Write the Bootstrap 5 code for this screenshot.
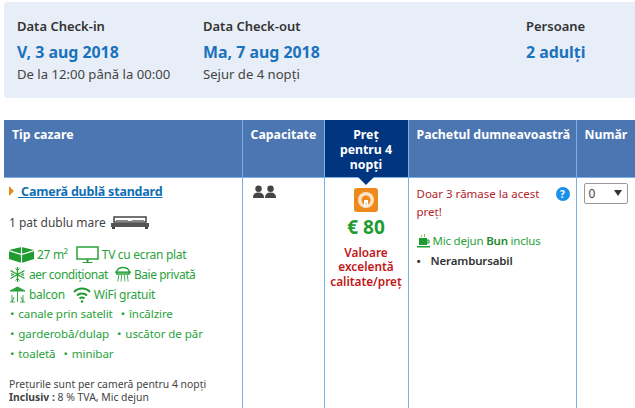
<!DOCTYPE html>
<html lang="ro">
<head>
<meta charset="UTF-8">
<title>Rezervare</title>
<link href="https://cdn.jsdelivr.net/npm/bootstrap@5.3.3/dist/css/bootstrap.min.css" rel="stylesheet">
<style>
html, body { height: 408px; overflow: hidden; }
body { font-family: "Noto Sans", "Open Sans", sans-serif; font-size: 12px; color: #333; background: #fff; padding: 2px 0 0 4px; }
.stay-box { height: 96px; background: #e8eef8; border-radius: 3px 0 0 3px; padding: 15px 13px 0; }
.stay-col-a { width: 186px; }
.stay-col-b { width: 323px; }
.stay-label { font-size: 13px; font-weight: 600; line-height: 18px; color: #333; }
.stay-date { font-size: 15.9px; font-weight: 700; line-height: 22px; margin-top: 6px; color: #1a72bd; }
.stay-note { font-size: 13.1px; line-height: 18px; margin-top: 2px; color: #444; }
.room-table { width: 631px; margin-top: 22px; table-layout: fixed; border-collapse: collapse; }
.room-table th { height: 57px; background: #4c76b2; color: #fff; font-size: 12.3px; font-weight: 700; line-height: 15px; vertical-align: top; padding: 7px 8px; border-right: 1px solid #7ab2e6; border-bottom: 1px solid #7ab2e6; white-space: nowrap; }
.room-table th.price-head { background: #003580; text-align: center; position: relative; padding: 7px 10px 0; white-space: normal; }
.price-head::after { content: ""; position: absolute; left: 50%; bottom: -8px; margin-left: -8px; border: 8px solid transparent; border-bottom: 0; border-top-color: #003580; }
.room-table td { vertical-align: top; border-right: 1px solid #7ab2e6; height: 231px; }
.room-table td.room-cell { padding: 5px 0 0 5px; }
.room-name { display: block; font-size: 12.5px; font-weight: 700; line-height: 18px; letter-spacing: -.2px; color: #0f6fb5; }
.room-name a { color: #0f6fb5; text-decoration: underline; }
.room-arrow { display: inline-block; border: 5px solid transparent; border-left: 5px solid #e58a1f; border-right: 0; margin-right: 4px; }
.bed-line { display: flex; align-items: center; gap: 4px; margin-top: 12px; font-size: 12px; line-height: 20px; color: #444; }
.fac-line { display: flex; align-items: center; color: #2aa13c; font-size: 12px; line-height: 20px; height: 20px; white-space: nowrap; letter-spacing: -.3px; }
.fac-line svg { flex: none; margin-right: 3px; }
.fac-first { margin-top: 12px; }
.fac-gap { margin-left: 8px; }
.fac-tight { letter-spacing: -.45px; }
.fac-tight .fac-gap { margin-left: 7px; }
.fac-list { padding-left: 1px; }
.fac-list .fac-line { font-size: 11.6px; height: 19.7px; letter-spacing: -.1px; }
.fac-dot { margin-right: 4px; }
.fine-print { margin-top: 14px; font-size: 10.4px; line-height: 13px; color: #444; }
.room-table td.guest-cell { padding: 5px 0 0 10px; }
.room-table td.price-cell { text-align: center; padding: 10px 4px 0; }
.price-badge { display: block; margin: 0 auto; }
.price-num { font-size: 19px; font-weight: 700; line-height: 22px; color: #1f9b30; margin-top: 4px; }
.price-tag { font-size: 11.8px; font-weight: 600; line-height: 14.5px; color: #c01818; margin-top: 7px; }
.room-table td.pack-cell { padding: 7px 6px 0 8px; position: relative; }
.pack-warn { font-size: 11.5px; line-height: 18px; color: #b3232b; padding-right: 24px; }
.help-dot { position: absolute; top: 9px; right: 6px; width: 14px; height: 14px; border-radius: 50%; background: #1a90e8; color: #fff; font-size: 10px; font-weight: 700; line-height: 14px; text-align: center; }
.pack-food { display: flex; align-items: center; gap: 3px; margin-top: 10px; color: #2aa13c; font-size: 11.5px; line-height: 20px; letter-spacing: -.2px; }
.pack-food b { font-weight: 600; color: #1d8a2e; }
.pack-rule { font-size: 11.5px; font-weight: 600; line-height: 20px; letter-spacing: -.15px; color: #333; }
.pack-rule span { display: inline-block; width: 14px; }
.room-table td.qty-cell { padding: 5px 0 0 7px; }
.qty-box { width: 44px; height: 21px; border: 1px solid #999; border-radius: 2px; padding-left: 4px; font-size: 12px; line-height: 20px; color: #444; position: relative; background: #fff; }
.qty-box::after { content: ""; position: absolute; right: 5px; top: 6px; border: 4px solid transparent; border-bottom: 0; border-top: 6px solid #333; }
</style>
</head>
<body>
<div class="stay-box d-flex">
  <div class="stay-col-a">
    <div class="stay-label">Data Check-in</div>
    <div class="stay-date">V, 3 aug 2018</div>
    <div class="stay-note">De la 12:00 până la 00:00</div>
  </div>
  <div class="stay-col-b">
    <div class="stay-label">Data Check-out</div>
    <div class="stay-date">Ma, 7 aug 2018</div>
    <div class="stay-note">Sejur de 4 nopți</div>
  </div>
  <div>
    <div class="stay-label">Persoane</div>
    <div class="stay-date">2 adulți</div>
  </div>
</div>

<table class="room-table">
  <colgroup>
    <col style="width:238px"><col style="width:82px"><col style="width:84px"><col style="width:168px"><col style="width:59px">
  </colgroup>
  <thead>
    <tr>
      <th>Tip cazare</th>
      <th>Capacitate</th>
      <th class="price-head">Preț pentru 4 nopți</th>
      <th>Pachetul dumneavoastră</th>
      <th>Număr</th>
    </tr>
  </thead>
  <tbody>
    <tr>
      <td class="room-cell">
        <div class="room-name"><i class="room-arrow"></i><a href="#">&nbsp;Cameră dublă standard</a></div>
        <div class="bed-line">1 pat dublu mare
          <svg width="40" height="14" viewBox="0 0 40 14"><path d="M4 1h32v5H4z" fill="none" stroke="#444" stroke-width="1.5"/><path d="M1 7h38v4H1z" fill="#555"/><path d="M6 4h12v2H6zM22 4h12v2H22z" fill="#888"/><path d="M2 11h3v2H2zM35 11h3v2h-3z" fill="#444"/></svg>
        </div>
        <div class="fac-line fac-first">
          <svg width="25" height="16" viewBox="0 0 25 16"><path d="M12.5 0 25 3v9l-12.5 4L0 12V3z" fill="#1f9b30"/><path d="M12.5 0v16M0 3.500l12.5 4 12.5-4" fill="none" stroke="#fff" stroke-width="1.2"/></svg>
          27 m²
          <svg class="fac-gap" width="23" height="18" viewBox="0 0 23 18"><rect x="1" y="1" width="21" height="12" fill="none" stroke="#2aa13c" stroke-width="1.5"/><path d="M10.5 13h2v3h4v1h-10v-1h4z" fill="#2aa13c"/></svg>
          TV cu ecran plat
        </div>
        <div class="fac-line fac-tight">
          <svg width="17" height="17" viewBox="0 0 17 17" fill="none" stroke="#2aa13c" stroke-width="1.4"><path d="M8.5 1v15M1.5 4.500l14 8M15.500 4.500l-14 8"/><path d="M6.500 2.500l2 2 2-2M6.500 14.500l2-2 2 2M2 7.500l3 1-3 1M15 7.500l-3 1 3 1" stroke-width="1"/></svg>
          aer condiționat
          <svg class="fac-gap" width="16" height="17" viewBox="0 0 17 17" fill="none" stroke="#2aa13c"><path d="M2 8V5.500a6.500 4.500 0 0 1 13 0V8z" fill="#fff" stroke-width="1.6"/><path d="M0 6h17" stroke-width="1.6"/><path d="M4 9l-1 7M7 9l-.5 7M10 9l.5 7M13 9l1 7" stroke-width=".9"/></svg>
          Baie privată
        </div>
        <div class="fac-line">
          <svg width="17" height="17" viewBox="0 0 17 17" fill="none" stroke="#2aa13c"><path d="M1 5 8.500 1 16 5z" fill="#2aa13c"/><path d="M8.500 5v11M1 16h5M11 16h5M3 9v7M14 9v7M5 11l-2 5M12 11l2 5" stroke-width=".9"/></svg>
          balcon
          <svg class="fac-gap" width="18" height="17" viewBox="0 0 18 17" fill="none" stroke="#1f9b30" stroke-width="2"><path d="M1 6a11 11 0 0 1 16 0M4 9.500a7 7 0 0 1 10 0M6.500 12.500a3.500 3.500 0 0 1 5 0"/><circle cx="9" cy="15.500" r="1.3" fill="#1f9b30" stroke="none"/></svg>
          WiFi gratuit
        </div>
        <div class="fac-list">
          <div class="fac-line"><span class="fac-dot">•</span>canale prin satelit<span class="fac-dot fac-gap">•</span>încălzire</div>
          <div class="fac-line"><span class="fac-dot">•</span>garderobă/dulap<span class="fac-dot fac-gap">•</span>uscător de păr</div>
          <div class="fac-line"><span class="fac-dot">•</span>toaletă<span class="fac-dot fac-gap">•</span>minibar</div>
        </div>
        <div class="fine-print">Prețurile sunt per cameră pentru 4 nopți<br><strong>Inclusiv :</strong> 8 % TVA, Mic dejun</div>
      </td>
      <td class="guest-cell">
        <svg width="24" height="14" viewBox="0 0 26 15" fill="#444"><circle cx="6" cy="4" r="3.500"/><circle cx="19" cy="4" r="3.500"/><path d="M0 14c0-4 2-6 6-6s6 2 6 6zM13 14c0-4 2-6 6-6s6 2 6 6z"/></svg>
      </td>
      <td class="price-cell">
        <svg class="price-badge" width="24" height="24" viewBox="0 0 24 24"><rect width="24" height="24" rx="3" fill="#ee8a1c"/><circle cx="12" cy="12" r="8" fill="#fbe3c8"/><circle cx="12" cy="12" r="4.500" fill="#ee8a1c"/><path d="M10 12h4v7h-1.500v-4h-1v4H10z" fill="#fff"/></svg>
        <div class="price-num">€ 80</div>
        <div class="price-tag">Valoare excelentă calitate/preț</div>
      </td>
      <td class="pack-cell">
        <div class="pack-warn">Doar 3 rămase la acest preț!</div>
        <span class="help-dot">?</span>
        <div class="pack-food">
          <svg width="13" height="14" viewBox="0 0 13 14"><path d="M4 1h1v2H4zM7 0h1v3H7z" fill="#8bc34a"/><path d="M2 4h8v7H2z" fill="#1f9b30"/><path d="M10 6h2v3h-2z" fill="none" stroke="#1f9b30"/><path d="M0 12h13v1.500H0z" fill="#1f9b30"/></svg>
          <span>Mic dejun <b>Bun</b> inclus</span>
        </div>
        <div class="pack-rule"><span>•</span>Nerambursabil</div>
      </td>
      <td class="qty-cell"><div class="qty-box">0</div></td>
    </tr>
  </tbody>
</table>
<script src="https://cdn.jsdelivr.net/npm/bootstrap@5.3.3/dist/js/bootstrap.bundle.min.js"></script>
</body>
</html>
